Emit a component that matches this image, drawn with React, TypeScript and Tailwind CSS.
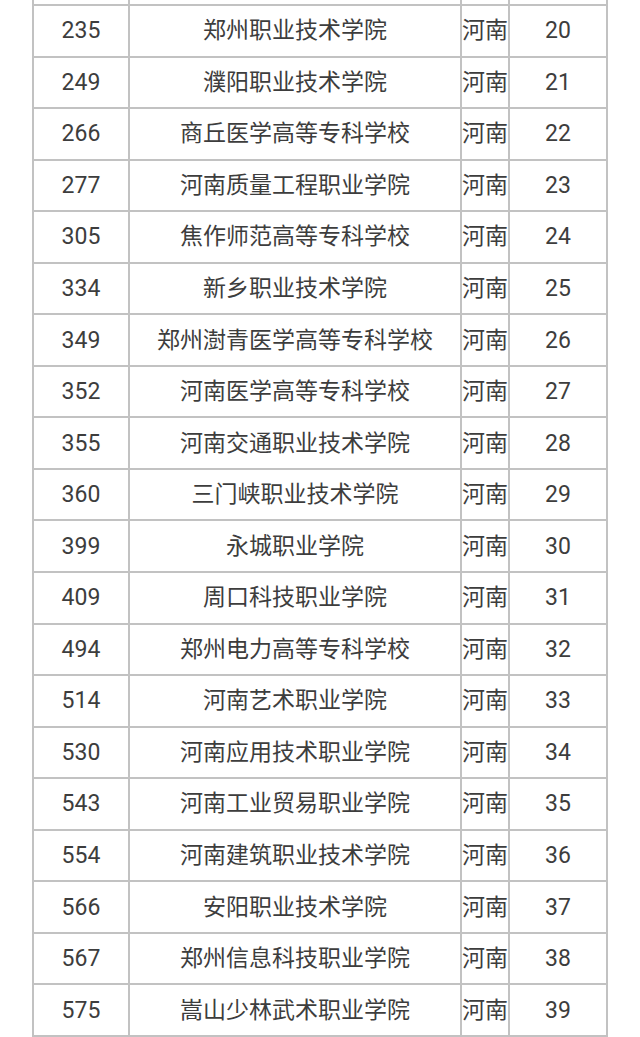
import React from "react";

const rows: [string, string, string][] = [
  ["235", "郑州职业技术学院", "20"],
  ["249", "濮阳职业技术学院", "21"],
  ["266", "商丘医学高等专科学校", "22"],
  ["277", "河南质量工程职业学院", "23"],
  ["305", "焦作师范高等专科学校", "24"],
  ["334", "新乡职业技术学院", "25"],
  ["349", "郑州澍青医学高等专科学校", "26"],
  ["352", "河南医学高等专科学校", "27"],
  ["355", "河南交通职业技术学院", "28"],
  ["360", "三门峡职业技术学院", "29"],
  ["399", "永城职业学院", "30"],
  ["409", "周口科技职业学院", "31"],
  ["494", "郑州电力高等专科学校", "32"],
  ["514", "河南艺术职业学院", "33"],
  ["530", "河南应用技术职业学院", "34"],
  ["543", "河南工业贸易职业学院", "35"],
  ["554", "河南建筑职业技术学院", "36"],
  ["566", "安阳职业技术学院", "37"],
  ["567", "郑州信息科技职业学院", "38"],
  ["575", "嵩山少林武术职业学院", "39"],
];

export default function App() {
  return (
    <div className="w-[640px] h-[1037px] bg-white overflow-hidden">
      <div
        className="ml-[32px] w-[576px] bg-[#c2c2c2] grid grid-cols-[94px_330px_46px_96px] gap-x-[2px] gap-y-[2px] px-[2px] pb-[2px] text-[23px] text-[#3d3d3d] leading-none"
        style={{ fontFamily: '"Roboto", "Noto Sans CJK SC", sans-serif' }}
      >
        <div className="bg-white h-[4px]" />
        <div className="bg-white h-[4px]" />
        <div className="bg-white h-[4px]" />
        <div className="bg-white h-[4px]" />
        {rows.map(([a, b, c]) => (
          <React.Fragment key={a}>
            <div className="bg-white h-[49.55px] flex items-center justify-center">{a}</div>
            <div className="bg-white h-[49.55px] flex items-center justify-center">{b}</div>
            <div className="bg-white h-[49.55px] flex items-center justify-center whitespace-nowrap">河南</div>
            <div className="bg-white h-[49.55px] flex items-center justify-center">{c}</div>
          </React.Fragment>
        ))}
      </div>
    </div>
  );
}
